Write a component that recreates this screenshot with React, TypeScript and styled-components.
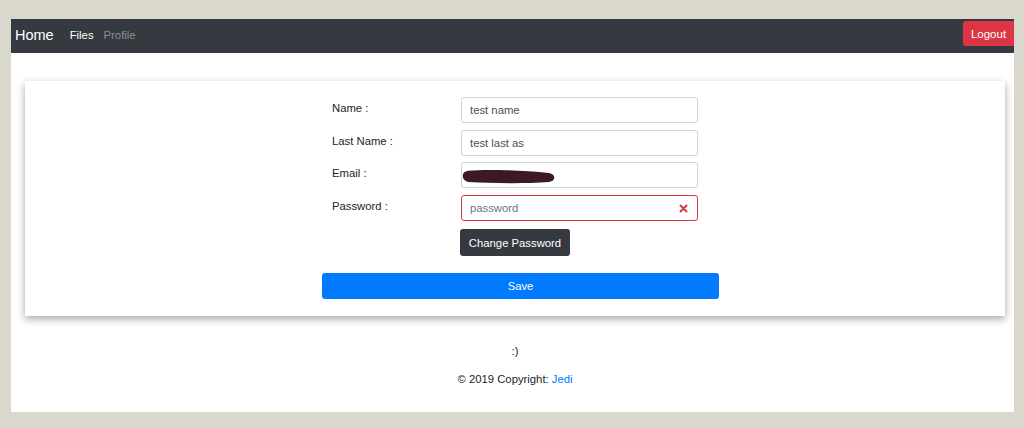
import React from "react";
import styled, { createGlobalStyle } from "styled-components";

const Global = createGlobalStyle`
  html, body { margin: 0; padding: 0; background: #dad8cc; }
  body { font-family: "Liberation Sans", Arial, sans-serif; }
  * { box-sizing: border-box; }
`;

const Page = styled.div`
  margin: 19px 10px 0 11px;
  background: #fff;
  height: 393px;
  display: flex;
  flex-direction: column;
`;

const Navbar = styled.nav`
  height: 34px;
  background: #343a40;
  display: flex;
  align-items: center;
  padding-left: 4px;
`;

const Brand = styled.span`
  color: #fff;
  font-size: 14.5px;
  margin-right: 16px;
  margin-bottom: 3px;
`;

const NavLink = styled.span<{ $muted?: boolean }>`
  color: ${(p) => (p.$muted ? "#8b8f94" : "#fff")};
  font-size: 11.3px;
  margin-right: 10px;
  margin-bottom: 3px;
`;

const Spacer = styled.div`
  flex: 1;
`;

const LogoutButton = styled.button`
  align-self: flex-start;
  margin-top: 2px;
  height: 25px;
  width: 51px;
  background: #dc3545;
  color: #fff;
  border: none;
  border-radius: 3px 0 0 3px;
  font-family: inherit;
  font-size: 11.5px;
  padding: 0;
`;

const Main = styled.main`
  padding: 28px 9px 0 14px;
`;

const Card = styled.section`
  height: 235px;
  background: #fff;
  box-shadow: 0 3px 8px rgba(0, 0, 0, 0.35);
  padding: 16px 0 0 297px;
`;

const Form = styled.div`
  width: 397px;
  display: flex;
  flex-direction: column;
`;

const Row = styled.div`
  display: grid;
  grid-template-columns: 139px 237px;
  margin-bottom: 6.5px;
`;

const Label = styled.label`
  padding-left: 10px;
  padding-top: 5px;
  font-size: 11.3px;
  color: #212529;
`;

const InputBox = styled.div<{ $invalid?: boolean }>`
  position: relative;
  height: 26px;
  border: 1px solid ${(p) => (p.$invalid ? "#dc3545" : "#ced4da")};
  border-radius: 3px;
  display: flex;
  align-items: center;
  padding: 0 8px;
  font-size: 11.3px;
  color: #495057;
`;

const Placeholder = styled.span`
  color: #6c757d;
`;

const ClearIcon = styled.svg`
  position: absolute;
  right: 9px;
  top: 8px;
`;

const Redact = styled.svg`
  position: absolute;
  left: -1px;
  top: 6px;
`;

const ChangeButton = styled.button`
  margin: 2px 0 0 138px;
  width: 110px;
  height: 27px;
  background: #343a40;
  color: #fff;
  border: none;
  border-radius: 3px;
  font-family: inherit;
  font-size: 11.3px;
  padding: 0;
`;

const SaveButton = styled.button`
  margin-top: 17px;
  width: 397px;
  height: 26px;
  background: #007bff;
  color: #fff;
  border: none;
  border-radius: 3px;
  font-family: inherit;
  font-size: 11.3px;
  padding: 0;
`;

const Footer = styled.footer`
  display: flex;
  flex-direction: column;
  align-items: center;
  padding-top: 29px;
  padding-left: 5px;
  font-size: 11.3px;
  color: #212529;
`;

const Smile = styled.div`
  margin-bottom: 16px;
`;

const Link = styled.span`
  color: #007bff;
`;

export default function App() {
  return (
    <>
      <Global />
      <Page>
        <Navbar>
          <Brand>Home</Brand>
          <NavLink>Files</NavLink>
          <NavLink $muted>Profile</NavLink>
          <Spacer />
          <LogoutButton>Logout</LogoutButton>
        </Navbar>
        <Main>
          <Card>
            <Form>
              <Row>
                <Label>Name :</Label>
                <InputBox>test name</InputBox>
              </Row>
              <Row>
                <Label>Last Name :</Label>
                <InputBox>test last as</InputBox>
              </Row>
              <Row>
                <Label>Email :</Label>
                <InputBox>
                  <Redact width="95" height="16" viewBox="0 0 95 16">
                    <path
                      d="M6 2 C 20 0, 60 1, 88 4 C 95 5, 95 12, 88 13 C 60 15, 30 14, 8 13 C 0 12, 0 3, 6 2 Z"
                      fill="#3b1a22"
                    />
                  </Redact>
                </InputBox>
              </Row>
              <Row>
                <Label>Password :</Label>
                <InputBox $invalid>
                  <Placeholder>password</Placeholder>
                  <ClearIcon width="9" height="9" viewBox="0 0 9 9">
                    <path d="M1.5 1.5 L7.5 7.5 M7.5 1.5 L1.5 7.5" stroke="#dc3545" strokeWidth="2" strokeLinecap="round" />
                  </ClearIcon>
                </InputBox>
              </Row>
              <ChangeButton>Change Password</ChangeButton>
              <SaveButton>Save</SaveButton>
            </Form>
          </Card>
        </Main>
        <Footer>
          <Smile>:)</Smile>
          <div>
            © 2019 Copyright: <Link>Jedi</Link>
          </div>
        </Footer>
      </Page>
    </>
  );
}
